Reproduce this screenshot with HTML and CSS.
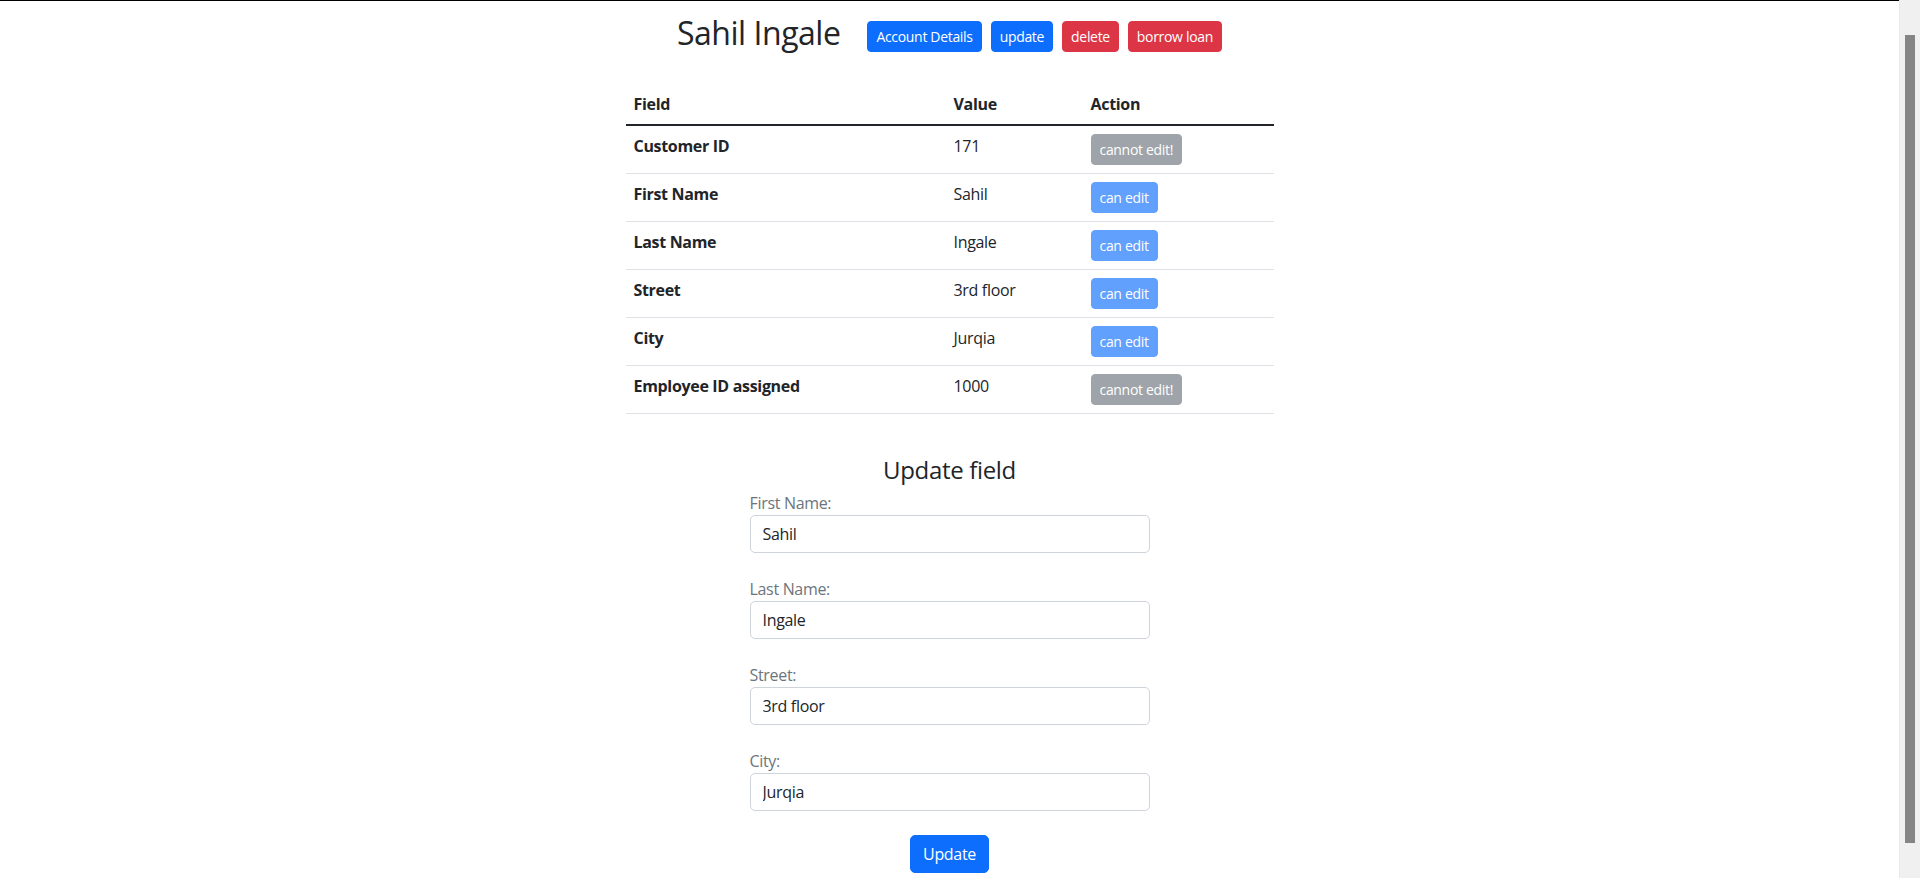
FILE: index.html
```html
<!DOCTYPE html>
<html lang="en">
<head>
<meta charset="utf-8">
<title>Sahil Ingale</title>
<link rel="stylesheet" href="styles.css">
</head>
<body>
<div class="viewport">
  <main class="page">
    <div class="container">
      <div class="header">
        <h2 class="title">Sahil Ingale</h2>
        <div class="actions">
          <button class="btn btn-sm btn-primary">Account Details</button>
          <button class="btn btn-sm btn-primary">update</button>
          <button class="btn btn-sm btn-danger">delete</button>
          <button class="btn btn-sm btn-danger">borrow loan</button>
        </div>
      </div>

      <table class="table">
        <colgroup>
          <col class="col-field">
          <col class="col-value">
          <col class="col-action">
        </colgroup>
        <thead>
          <tr><th>Field</th><th>Value</th><th>Action</th></tr>
        </thead>
        <tbody>
          <tr><th>Customer ID</th><td>171</td><td><button class="btn btn-sm btn-secondary" disabled>cannot edit!</button></td></tr>
          <tr><th>First Name</th><td>Sahil</td><td><button class="btn btn-sm btn-primary" disabled>can edit</button></td></tr>
          <tr><th>Last Name</th><td>Ingale</td><td><button class="btn btn-sm btn-primary" disabled>can edit</button></td></tr>
          <tr><th>Street</th><td>3rd floor</td><td><button class="btn btn-sm btn-primary" disabled>can edit</button></td></tr>
          <tr><th>City</th><td>Jurqia</td><td><button class="btn btn-sm btn-primary" disabled>can edit</button></td></tr>
          <tr><th>Employee ID assigned</th><td>1000</td><td><button class="btn btn-sm btn-secondary" disabled>cannot edit!</button></td></tr>
        </tbody>
      </table>

      <div class="update">
        <h4 class="update-title">Update field</h4>
        <form class="update-form">
          <div class="group">
            <label class="label" for="fn">First Name:</label>
            <input class="input" id="fn" type="text" value="Sahil">
          </div>
          <div class="group">
            <label class="label" for="ln">Last Name:</label>
            <input class="input" id="ln" type="text" value="Ingale">
          </div>
          <div class="group">
            <label class="label" for="st">Street:</label>
            <input class="input" id="st" type="text" value="3rd floor">
          </div>
          <div class="group">
            <label class="label" for="ct">City:</label>
            <input class="input" id="ct" type="text" value="Jurqia">
          </div>
          <div class="submit-row">
            <button type="button" class="btn btn-primary">Update</button>
          </div>
        </form>
      </div>
    </div>
  </main>
  <div class="scrollbar" aria-hidden="true">
    <div class="scrollbar-thumb"></div>
  </div>
</div>
</body>
</html>
```

FILE: styles.css
```css
html,
body {
  margin: 0;
  height: 100%;
  overflow: hidden;
}

body {
  font-family: "Open Sans", "Noto Sans", "Liberation Sans", sans-serif;
  font-size: 16px;
  line-height: 1.5;
  letter-spacing: -0.02em;
  color: #212529;
  background: #fff;
}

.viewport {
  display: flex;
  height: 100vh;
}

.page {
  flex: 1;
  min-width: 0;
  overflow: hidden;
  border-top: 1px solid #000;
}

.scrollbar {
  flex: 0 0 21px;
  box-sizing: border-box;
  padding: 35px 5px;
  background: #f0f0f0;
  border-left: 1px solid #e9e9e9;
}

.scrollbar-thumb {
  height: 100%;
  background: #858585;
}

.container {
  max-width: 1296px;
  margin: 0 auto;
  padding: 0 12px 16px;
}

.header {
  display: flex;
  justify-content: center;
  align-items: flex-start;
}

.title {
  margin: 13px 27px 0 0;
  font-size: 32px;
  font-weight: 400;
  line-height: 1.2;
  letter-spacing: -0.015em;
}

.actions {
  display: flex;
  gap: 9px;
  margin-top: 20px;
}

.btn {
  display: inline-block;
  font-family: inherit;
  font-size: 16px;
  line-height: 24px;
  letter-spacing: inherit;
  padding: 6px 12px;
  border: 1px solid transparent;
  border-radius: 5px;
  color: #fff;
  cursor: pointer;
}

.btn-sm {
  font-size: 14px;
  line-height: 21px;
  padding: 4px 8px;
  border-radius: 4px;
}

.btn-primary {
  background: #0d6efd;
  border-color: #0d6efd;
}

.btn-danger {
  background: #dc3545;
  border-color: #dc3545;
}

.btn-secondary {
  background: #6c757d;
  border-color: #6c757d;
}

.btn:disabled {
  opacity: 0.65;
  cursor: default;
}

.table {
  width: 50%;
  margin: 32px auto 0;
  border-collapse: collapse;
}

.col-field {
  width: 320px;
}

.col-value {
  width: 137px;
}

.table th,
.table td {
  padding: 8px;
  text-align: left;
  vertical-align: top;
  border-bottom: 1px solid #dee2e6;
}

.table th {
  font-weight: 700;
}

.table thead th {
  border-bottom: 2px solid #212529;
}

.update {
  margin-top: 42px;
}

.update-title {
  margin: 0 0 6px;
  font-size: 24px;
  font-weight: 400;
  line-height: 1.2;
  text-align: center;
}

.update-form {
  width: 400px;
  margin: 0 auto;
}

.group {
  display: flex;
  flex-direction: column;
  margin-bottom: 24px;
}

.label {
  color: #6c757d;
  line-height: 24px;
}

.input {
  box-sizing: border-box;
  width: 100%;
  height: 38px;
  padding: 6px 12px;
  font-family: inherit;
  font-size: 16px;
  line-height: 24px;
  letter-spacing: inherit;
  color: #212529;
  background: #fff;
  border: 1px solid #ced4da;
  border-radius: 5px;
}

.submit-row {
  display: flex;
  justify-content: center;
}
```
